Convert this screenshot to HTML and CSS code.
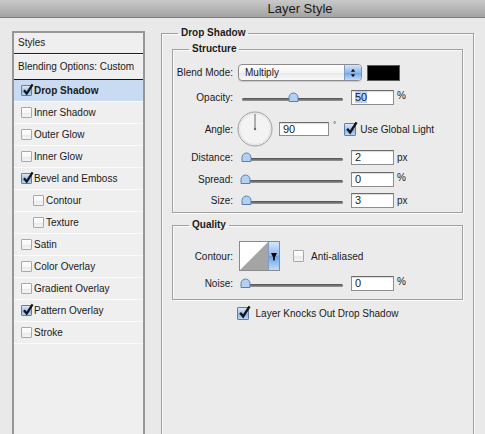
FILE: index.html
```html
<!DOCTYPE html>
<html lang="en">
<head>
    <meta charset="UTF-8">
    <title>Layer Style</title>
    <link rel="stylesheet" href="styles.css">
</head>
<body>
    <!-- Title bar -->
    <div class="titlebar">Layer Style</div>

    <div class="dialog">
        <!-- Styles list -->
        <div class="style-list">
            <div class="list-head">Styles</div>
            <div class="list-blend">Blending Options: Custom</div>
            <div class="item selected"><span class="cb on"><svg viewBox="0 0 11 11"><path d="M2 5.3l2.7 3.4L10.6-0.6"/></svg></span>Drop Shadow</div>
            <div class="item"><span class="cb"></span>Inner Shadow</div>
            <div class="item"><span class="cb"></span>Outer Glow</div>
            <div class="item"><span class="cb"></span>Inner Glow</div>
            <div class="item"><span class="cb on"><svg viewBox="0 0 11 11"><path d="M2 5.3l2.7 3.4L10.6-0.6"/></svg></span>Bevel and Emboss</div>
            <div class="item sub"><span class="cb"></span>Contour</div>
            <div class="item sub"><span class="cb"></span>Texture</div>
            <div class="item"><span class="cb"></span>Satin</div>
            <div class="item"><span class="cb"></span>Color Overlay</div>
            <div class="item"><span class="cb"></span>Gradient Overlay</div>
            <div class="item"><span class="cb on"><svg viewBox="0 0 11 11"><path d="M2 5.3l2.7 3.4L10.6-0.6"/></svg></span>Pattern Overlay</div>
            <div class="item"><span class="cb"></span>Stroke</div>
        </div>

        <!-- Settings -->
        <div class="settings">
            <fieldset class="group outer">
                <legend>Drop Shadow</legend>

                <fieldset class="group structure">
                    <legend>Structure</legend>

                    <div class="row blend-row">
                        <span class="lbl">Blend Mode:</span>
                        <div class="select">
                            <span class="select-text">Multiply</span>
                            <span class="stepper"><svg viewBox="0 0 7 11"><path d="M3.5 0.5L6 4H1z M3.5 10.5L6 7H1z"/></svg></span>
                        </div>
                        <div class="swatch"></div>
                    </div>

                    <div class="row opacity-row">
                        <span class="lbl">Opacity:</span>
                        <div class="slider"><svg class="thumb" style="left: 50%" viewBox="0 0 11 10"><path d="M1 9.5V5.5a4.5 4.5 0 0 1 9 0v4z"/></svg></div>
                        <div class="field"><span class="hl">50</span></div>
                        <span class="unit">%</span>
                    </div>

                    <div class="row angle-row">
                        <span class="lbl">Angle:</span>
                        <svg class="dial" viewBox="0 0 36 36">
                            <circle cx="18" cy="18" r="17" fill="#f3f3f3" stroke="#9c9c9c"/>
                            <circle cx="18" cy="18" r="15.5" fill="none" stroke="#e2e2e2"/>
                            <path d="M18 18V3" stroke="#6a6a6a"/>
                            <circle cx="18" cy="18" r="1.2" fill="#6a6a6a"/>
                        </svg>
                        <div class="field angle-field">90</div>
                        <span class="deg">°</span>
                        <span class="cb on big"><svg viewBox="0 0 11 11"><path d="M2 5.3l2.7 3.4L10.6-0.6"/></svg></span>
                        <span class="cb-text">Use Global Light</span>
                    </div>

                    <div class="row distance-row">
                        <span class="lbl">Distance:</span>
                        <div class="slider"><svg class="thumb" style="left: 4%" viewBox="0 0 11 10"><path d="M1 9.5V5.5a4.5 4.5 0 0 1 9 0v4z"/></svg></div>
                        <div class="field">2</div>
                        <span class="unit px">px</span>
                    </div>

                    <div class="row spread-row">
                        <span class="lbl">Spread:</span>
                        <div class="slider"><svg class="thumb" style="left: 3%" viewBox="0 0 11 10"><path d="M1 9.5V5.5a4.5 4.5 0 0 1 9 0v4z"/></svg></div>
                        <div class="field">0</div>
                        <span class="unit">%</span>
                    </div>

                    <div class="row size-row">
                        <span class="lbl">Size:</span>
                        <div class="slider"><svg class="thumb" style="left: 4%" viewBox="0 0 11 10"><path d="M1 9.5V5.5a4.5 4.5 0 0 1 9 0v4z"/></svg></div>
                        <div class="field">3</div>
                        <span class="unit px">px</span>
                    </div>
                </fieldset>

                <fieldset class="group quality">
                    <legend>Quality</legend>

                    <div class="row contour-row">
                        <span class="lbl">Contour:</span>
                        <div class="contour">
                            <svg class="contour-curve" viewBox="0 0 28 28"><rect width="28" height="28" fill="#fff"/><path d="M0 28L28 0V28Z" fill="#a5a5a5"/></svg>
                            <span class="contour-drop"><svg viewBox="0 0 6 9"><path d="M0 1h6L3.8 5.5V8.5H2.2V5.5z"/></svg></span>
                        </div>
                        <span class="cb aa"></span>
                        <span class="cb-text">Anti-aliased</span>
                    </div>

                    <div class="row noise-row">
                        <span class="lbl">Noise:</span>
                        <div class="slider"><svg class="thumb" style="left: 3%" viewBox="0 0 11 10"><path d="M1 9.5V5.5a4.5 4.5 0 0 1 9 0v4z"/></svg></div>
                        <div class="field">0</div>
                        <span class="unit">%</span>
                    </div>
                </fieldset>

                <div class="row knock-row">
                    <span class="cb on big"><svg viewBox="0 0 11 11"><path d="M2 5.3l2.7 3.4L10.6-0.6"/></svg></span>
                    <span class="cb-text">Layer Knocks Out Drop Shadow</span>
                </div>
            </fieldset>
        </div>
    </div>
</body>
</html>
```

FILE: styles.css
```css
/* page */
body {
    margin: 0;
    width: 485px;
    height: 434px;
    overflow: hidden;
    background-color: #e9e9e9;
    font-family: "Liberation Sans", Arial, sans-serif;
    font-size: 10px;
    color: #1a1a1a;
}

/* title bar */
.titlebar {
    height: 17px;
    line-height: 17px;
    padding-left: 115px;
    text-align: center;
    font-size: 13px;
    color: #1a1a1a;
    background: linear-gradient(#c9c9c9, #a3a3a3);
    border-bottom: 1px solid #7b7b7b;
}

.dialog {
    display: flex;
    align-items: flex-start;
    padding: 13px 0 0 12px;
}

/* styles list */
.style-list {
    width: 133px;
    height: 420px;
    flex-shrink: 0;
    box-sizing: border-box;
    border: 2px solid #979797;
    background-color: #efefef;
}
.list-head {
    height: 20px;
    line-height: 20px;
    padding-left: 4px;
    border-bottom: 2px solid #1f1f1f;
}
.list-blend {
    height: 24px;
    line-height: 24px;
    padding-left: 4px;
    border-top: 1px solid #fafafa;
    margin-top: -1px;
    border-bottom: 1px solid #151515;
}
.item {
    display: flex;
    align-items: center;
    height: 21px;
    padding-left: 7px;
    border-bottom: 1px solid #fbfbfb;
}
.item.selected {
    background-color: #c9daf3;
    font-weight: bold;
}
.item.sub {
    padding-left: 19px;
}

/* checkboxes */
.cb {
    width: 11px;
    height: 11px;
    flex-shrink: 0;
    box-sizing: border-box;
    margin-right: 2px;
    border: 1px solid #a8a8a8;
    border-radius: 1px;
    background: linear-gradient(#ffffff, #f7f7f7 50%, #e8e8e8 51%, #f4f4f4);
}
.cb.on {
    border-color: #5a7fae;
    background: linear-gradient(#dce9fa, #9fc1ea 50%, #84afe4 51%, #bcd7f7);
}
.cb svg {
    display: block;
    width: 11px;
    height: 11px;
    margin: -1px 0 0 0;
    overflow: visible;
}
.cb svg path {
    fill: none;
    stroke: #141414;
    stroke-width: 2.2;
}
.cb.big {
    width: 12px;
    height: 13px;
}
.cb.big svg {
    width: 12px;
    height: 12px;
}
.cb-text {
    margin-left: 4px;
}

/* settings side */
.settings {
    margin-left: 16px;
    margin-top: -4px;
}
.group {
    margin: 0;
    min-width: 0;
    border: 1px solid #a0a0a0;
    box-shadow: 1px 1px 0 #fafafa, inset 1px 1px 0 #fafafa;
}
.group legend {
    padding: 0 3px;
    line-height: 12px;
    font-weight: bold;
}
.outer {
    width: 313px;
    height: 420px;
    box-sizing: border-box;
    padding: 4px 10px 0 10px;
    background-color: #ebebeb;
}
.outer > legend {
    margin-left: 6px;
}
.structure {
    padding: 9px 0 4px 0;
}
.structure > legend,
.quality > legend {
    margin-left: 16px;
}
.quality {
    margin-top: 6px;
    padding: 10px 0 8px 0;
}

/* rows */
.row {
    display: flex;
    align-items: center;
}
.lbl {
    width: 60px;
    flex-shrink: 0;
    margin-right: 5px;
    text-align: right;
}
.blend-row { height: 17px; }
.opacity-row { height: 15px; margin-top: 9px; }
.angle-row { height: 38px; margin-top: 5px; }
.distance-row { height: 15px; margin-top: 2px; }
.spread-row { height: 15px; margin-top: 7px; }
.size-row { height: 15px; margin-top: 6px; }
.contour-row { height: 30px; }
.noise-row { height: 15px; margin-top: 5px; }
.knock-row {
    height: 12px;
    margin-top: 7px;
    justify-content: center;
}
.knock-row .cb-text {
    margin-left: 5px;
}

/* popup */
.select {
    display: flex;
    width: 124px;
    height: 17px;
    box-sizing: border-box;
    padding-left: 6px;
    border: 1px solid #8b8b8b;
    border-radius: 4px;
    overflow: hidden;
    background: linear-gradient(#ffffff, #f4f4f4 50%, #e8e8e8 51%, #f8f8f8);
    box-shadow: 0 1px 1px rgba(0, 0, 0, 0.15);
}
.select-text {
    flex: 1;
    line-height: 15px;
}
.stepper {
    display: flex;
    align-items: center;
    justify-content: center;
    width: 16px;
    border-left: 1px solid #7f9bc2;
    background: linear-gradient(#d3e5fb, #8db8ec 50%, #6da3e5 51%, #c0dcfb);
}
.stepper svg {
    width: 6px;
    height: 10px;
    fill: #111111;
}
.swatch {
    width: 33px;
    height: 16px;
    box-sizing: border-box;
    margin-left: 5px;
    background-color: #000000;
    border: 1px solid #5c5c5c;
}

/* slider */
.slider {
    position: relative;
    width: 101px;
    height: 3px;
    margin-left: 4px;
    margin-top: 3px;
    border-radius: 2px;
    background: linear-gradient(#4c4c4c, #9a9a9a);
}
.thumb {
    position: absolute;
    bottom: -1px;
    width: 11px;
    height: 10px;
    margin-left: -5px;
}
.thumb path {
    fill: #b3cff1;
    stroke: #5c80ae;
}

/* text fields */
.field {
    width: 43px;
    height: 15px;
    box-sizing: border-box;
    margin-left: 8px;
    padding-left: 3px;
    line-height: 13px;
    font-size: 11px;
    background-color: #ffffff;
    border: 1px solid #8e8e8e;
    border-top-color: #6c6c6c;
    box-shadow: inset 0 1px 1px rgba(0, 0, 0, 0.15);
}
.field .hl {
    background-color: #b4d3fa;
}
.unit {
    margin-left: 3px;
    align-self: flex-start;
}
.unit.px {
    align-self: center;
}

/* angle */
.dial {
    width: 36px;
    height: 36px;
    margin-left: -1px;
}
.angle-field {
    width: 50px;
    height: 14px;
    margin-left: 6px;
    line-height: 12px;
}
.deg {
    margin-left: 4px;
    align-self: flex-start;
    margin-top: 10px;
    font-size: 8px;
}
.angle-row .cb.big {
    margin-left: 8px;
    margin-right: 0;
}

/* contour */
.contour {
    display: flex;
    height: 30px;
    margin-left: 1px;
    box-sizing: border-box;
    border: 1px solid #8a8a8a;
}
.contour-curve {
    width: 28px;
    height: 28px;
    display: block;
}
.contour-drop {
    display: flex;
    align-items: center;
    justify-content: center;
    width: 10px;
    border-left: 1px solid #7f9bc2;
    background: linear-gradient(#d3e5fb, #8db8ec 50%, #6da3e5 51%, #c0dcfb);
}
.contour-drop svg {
    width: 6px;
    height: 9px;
    fill: #000000;
}
.cb.aa {
    width: 11px;
    height: 12px;
    margin-left: 13px;
    margin-right: 2px;
}
.contour-row .cb-text {
    margin-left: 5px;
}
```
